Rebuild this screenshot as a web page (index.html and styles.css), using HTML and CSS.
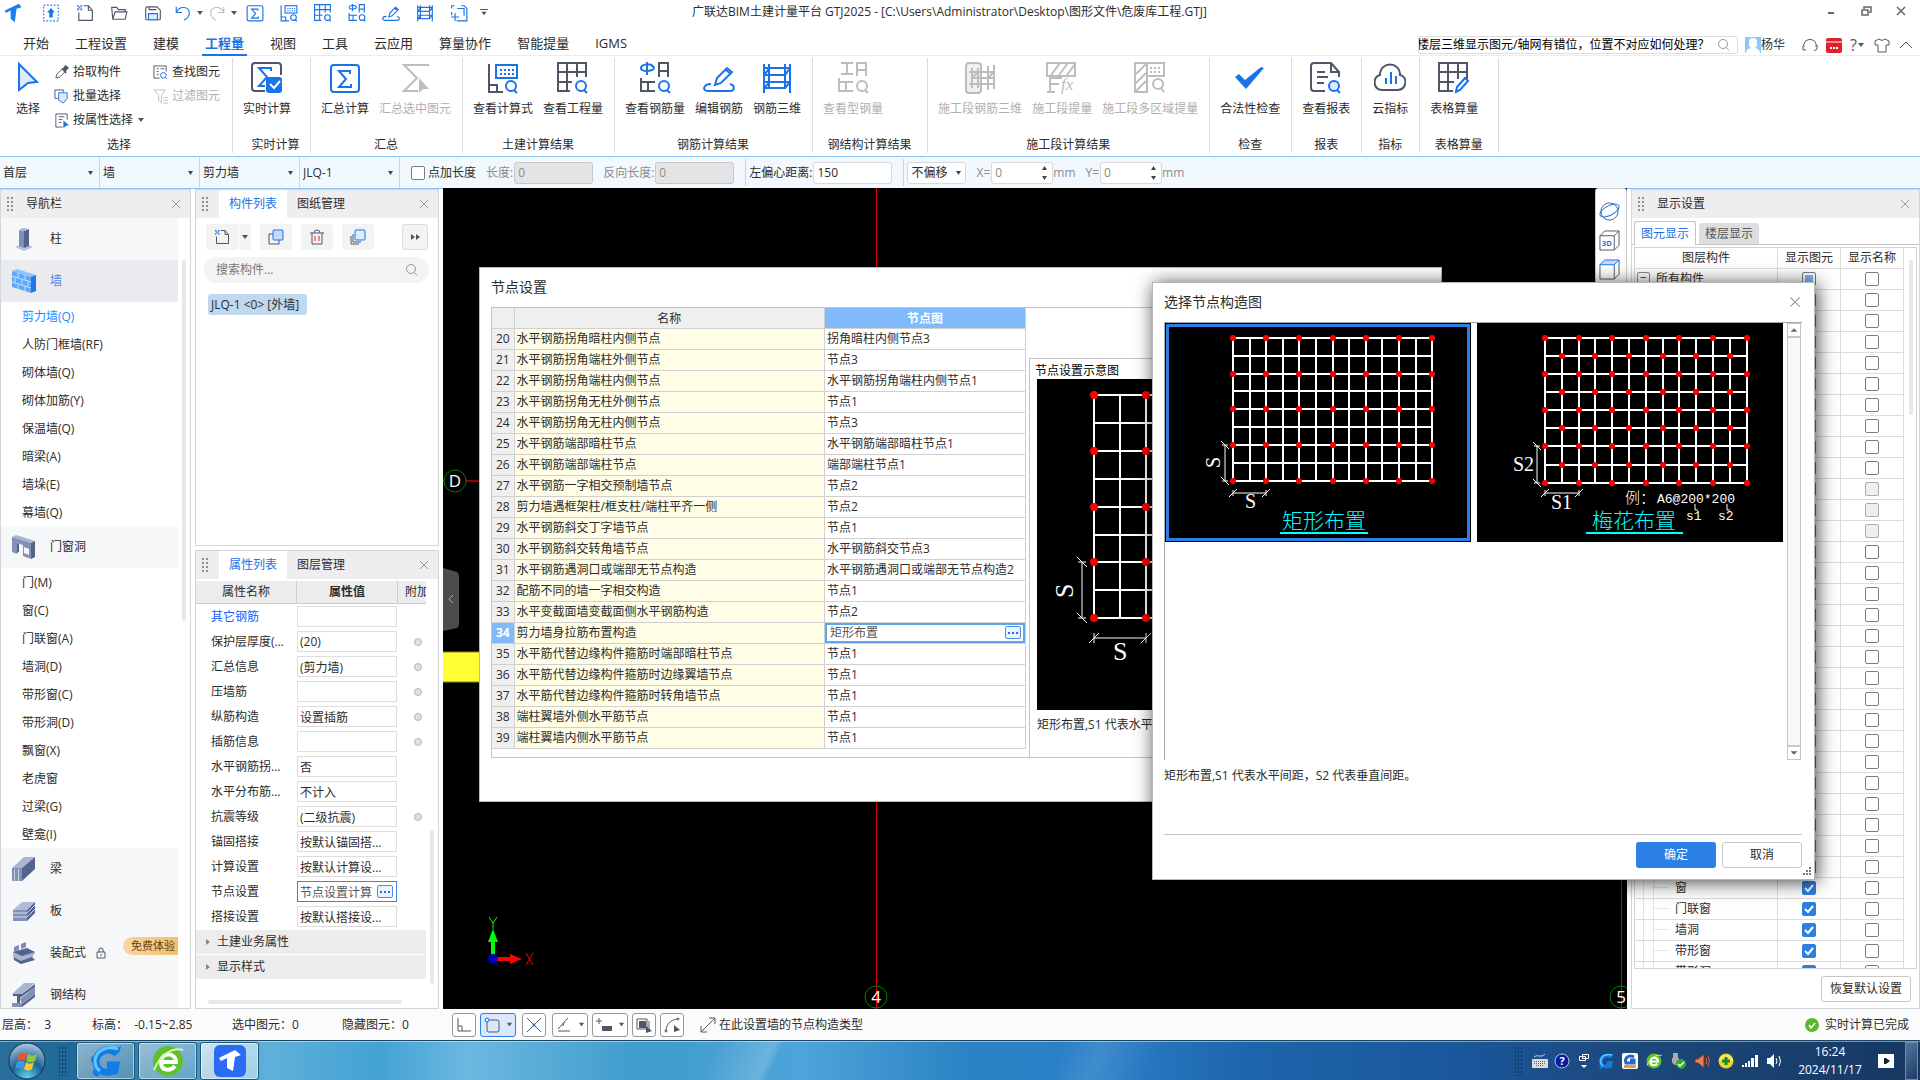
FILE: index.html
```html
<!DOCTYPE html>
<html lang="zh-CN">
<head>
<meta charset="utf-8">
<title>广联达BIM土建计量平台 GTJ2025</title>
<link rel="stylesheet" href="styles.css">
</head>
<body>
<svg class="sprite" aria-hidden="true">
  <symbol id="drag" viewBox="0 0 8 16"><path class="fg" d="M1 1h2v2H1zM5 1h2v2H5zM1 5h2v2H1zM5 5h2v2H5zM1 9h2v2H1zM5 9h2v2H5zM1 13h2v2H1zM5 13h2v2H5z"/></symbol>
  <symbol id="x" viewBox="0 0 12 12"><path class="sg" d="M2 2l8 8M10 2l-8 8"/></symbol>
  <symbol id="mag" viewBox="0 0 16 16"><circle class="sg" cx="7" cy="7" r="4.5"/><path class="sg" d="M10.500 10.500l2.500 3"/></symbol>
  <symbol id="down" viewBox="0 0 8 8"><path class="fd" d="M1 2h6L4 6z"/></symbol>
  <symbol id="more3" viewBox="0 0 12 10"><path class="f1" d="M1 4h2v2H1zM5 4h2v2H5zM9 4h2v2H9z"/></symbol>
  <symbol id="up-box" viewBox="0 0 32 32"><rect class="s1" x="3" y="2" width="26" height="28" stroke-dasharray="3 3" stroke-width="3"/><path class="f1" d="M16 7l7 8h-4v9h-6v-9H9z"/></symbol>
  <symbol id="new" viewBox="0 0 32 32"><path class="s2" d="M14 3h8l7 8v18H5V15"/><path class="s2" d="M22 3v8h7"/><path class="f1" d="M2 2h3v3H2zM8 2h3v3H8zM5 5h3v3H5zM2 8h3v3H2zM8 8h3v3H8z"/></symbol>
  <symbol id="open" viewBox="0 0 32 32"><path class="s2" d="M5 27L3 6h9l3 4h12v4M5 27h22l3-13H9z"/></symbol>
  <symbol id="save" viewBox="0 0 32 32"><path class="s2" d="M3 26V8q0-3 3-3h17l6 6v15q0 2-2 2H5q-2 0-2-2zM9 5v5h13"/><path class="s1 t1" d="M8 28V17h16v11z"/></symbol>
  <symbol id="undo" viewBox="0 0 32 32"><path class="s1" d="M4 5v10h10M4 15C10 2 28 4 27 17c0 6-4 9-9 12"/></symbol>
  <symbol id="redo" viewBox="0 0 32 32"><path class="s1" d="M28 5v10H18M28 15C22 2 4 4 5 17c0 6 4 9 9 12"/></symbol>
  <symbol id="sigma" viewBox="0 0 32 32"><rect class="s1" x="2" y="3" width="28" height="27" rx="3"/><path class="s1" d="M21 12V9H10l7 8-7 8h12v-3"/></symbol>
  <symbol id="live" viewBox="0 0 32 32"><path class="s2" d="M14 29H4q-3 0-3-3V4q0-3 3-3h23q3 0 3 3v9"/><path class="s1" d="M20 9V6H8l8 9-8 9h6"/><rect class="f1" x="15" y="15" width="16" height="16" rx="3"/><path class="sw" d="M19 22l4 4 6-7"/></symbol>
  <symbol id="sigma-sel" viewBox="0 0 32 32"><path class="s1" d="M30 3H5l13 13L5 29h14"/><path class="f1" d="M20 16l10 11h-6l-4 4z"/></symbol>
  <symbol id="formula" viewBox="0 0 32 32"><path class="s2" d="M2 2v28h8v-7H2M10 30h6"/><rect class="s1" x="9" y="3" width="21" height="13"/><path class="s1" stroke-dasharray="2 2" d="M13 8h14M13 12h14"/><circle class="s1" cx="24" cy="24" r="5"/><path class="s1" d="M27 28l3 3"/></symbol>
  <symbol id="table-q" viewBox="0 0 32 32"><path class="s2" d="M13 29H1V1h28v14M10 1v28M20 1v14M1 10h28M1 20h14"/><circle class="s1" cx="24" cy="24" r="5"/><path class="s1" d="M27 28l3 3"/></symbol>
  <symbol id="rebar-q" viewBox="0 0 32 32"><path class="s1" d="M8 0v13M13 3c-5-2-11 0-11 3s6 4 11 2-1-5-1-5"/><path class="s2" d="M20 15V1h9v14M20 9h9M2 16v13h14M2 20h14M9 20v9"/><circle class="s1" cx="25" cy="24" r="5"/><path class="s1" d="M28 28l3 3"/></symbol>
  <symbol id="edit" viewBox="0 0 32 32"><path class="s1" d="M12 23l2-7L24 6l5 4-11 11zM23 8l5 4M8 22c-8 0-9 7-3 7h22c5 0 5-6 0-7"/></symbol>
  <symbol id="rebar3d" viewBox="0 0 32 32"><path class="s1" d="M3 2v29M8 2v25M24 2v25M29 2v29M3 6h26M3 13l5-6M3 13h21l5-7M3 20h26M3 26l5-5M3 26h21l5-6"/></symbol>
  <symbol id="frame" viewBox="0 0 32 32"><path class="s1" d="M3 8V3h5M20 3h5l5 5v22H12M3 14v6M13 8h12v13M2 23h14M9 16v14"/></symbol>
  <symbol id="steel-q" viewBox="0 0 32 32"><path class="s1" d="M4 1h12M4 12h12M10 1v11M20 14V1h9v13M20 8h9M2 16v13h14M2 20h14M9 20v9"/><circle class="s1" cx="25" cy="24" r="5"/><path class="s1" d="M28 28l3 3"/></symbol>
  <symbol id="seg3d" viewBox="0 0 32 32"><rect class="s1 t1" x="2" y="1" width="15" height="30" rx="3"/><path class="s1" d="M8 6v20M14 6v20M24 4v24M30 3v24M5 10h25M5 22h25M8 16h22M8 16l6-6M24 16l6-6"/></symbol>
  <symbol id="segfx" viewBox="0 0 32 32"><path class="s1" d="M1 14V1h28v13zM5 13L14 1M13 13L22 1M21 13l8-11M4 30V16h12M4 22h9M1 30h8"/><text class="fx" x="15" y="28">fx</text></symbol>
  <symbol id="segarea" viewBox="0 0 32 32"><path class="s1" d="M13 30H1V1h29v13H13zM13 1v29M2 12L12 2M2 21l10-10M2 29l10-10"/><path class="s1" stroke-dasharray="2 2" d="M16 6h11M16 10h11"/><circle class="s1" cx="24" cy="22" r="5"/><path class="s1" d="M27 26l3 4"/></symbol>
  <symbol id="check" viewBox="0 0 32 32"><path class="f1" d="M1 15l4-3 6 6L27 5l3 1-18 21z"/></symbol>
  <symbol id="report" viewBox="0 0 32 32"><path class="s2" d="M15 29H4q-3 0-3-3V4q0-3 3-3h17l8 9v5M21 1v9h8M7 10h8M7 15h11M7 21h7"/><circle class="s1 t1" cx="24" cy="24" r="5"/><path class="s1" d="M27 28l3 3"/></symbol>
  <symbol id="cloud" viewBox="0 0 32 32"><path class="s2" d="M8 28C-2 27-1 14 6 13 6-1 26-1 26 13c8 2 7 14-2 15z"/><path class="s1" d="M12 22v-6M17 22V10M22 22v-8"/></symbol>
  <symbol id="table-e" viewBox="0 0 32 32"><path class="s2" d="M15 29H1V1h28v16M10 1v28M20 1v16M1 10h28M1 20h15"/><path class="s1" d="M18 30l1-5 8-9 3 3-8 9z"/></symbol>
  <symbol id="cursor" viewBox="0 0 24 30"><path class="s1 t1" d="M3 2l18 18-9 1-9 7z"/></symbol>
  <symbol id="pipette" viewBox="0 0 16 16"><path class="s2" d="M2 14l1-4 6-6 3 3-6 6z"/><path class="f2" d="M8 4l2-1 2-3 4 3-3 3v3h-1z"/></symbol>
  <symbol id="batch" viewBox="0 0 16 16"><path class="s2" d="M4 10H1V1h9v2"/><path class="s1 t1" d="M5 4h9v6l-4 5-5-3z"/></symbol>
  <symbol id="byprop" viewBox="0 0 16 16"><path class="s2" d="M9 15H2V1h12v6M5 4h6M5 7h4M5 10h3"/><path class="f1" d="M10 8l6 5-3 .5L10 16z"/></symbol>
  <symbol id="find" viewBox="0 0 16 16"><path class="s2" d="M7 14H1V1h13v6M4 4h2M8 4h4M4 7h2M4 10h2"/><circle class="s1" cx="11" cy="11" r="3"/><path class="s1" d="M13 13l2 2"/></symbol>
  <symbol id="filter" viewBox="0 0 16 16"><path class="s1" d="M1 1h12L9 7v8l-3-3V7zM11 9h5M11 12h5M11 15h5"/></symbol>
  <symbol id="copy" viewBox="0 0 16 16"><path class="s2" d="M5 5H1v10h10v-4"/><rect class="s1 t2" x="5" y="1" width="10" height="10" rx="1"/></symbol>
  <symbol id="trash" viewBox="0 0 16 16"><path class="s2" d="M1 4h14M3 4v11h10V4M5 4q0-3 3-3t3 3"/><path class="sr" d="M6 7v5M10 7v5"/></symbol>
  <symbol id="stack" viewBox="0 0 16 16"><path class="s2" d="M3 5v8h8M1 7v8h8"/><rect class="s1 t1" x="5" y="1" width="10" height="10" rx="1"/></symbol>
  <symbol id="planet" viewBox="0 0 22 22"><circle class="s2" cx="11" cy="11" r="9"/><ellipse class="s1" cx="11" cy="10" rx="11" ry="5" transform="rotate(-28 11 10)"/></symbol>
  <symbol id="cube3d" viewBox="0 0 22 22"><path class="s2" d="M1 6h15v15H1zM1 6l5-5h15v15l-5 5M16 6l5-5"/><text class="t3d" x="3" y="17">3D</text></symbol>
  <symbol id="cube" viewBox="0 0 22 22"><path class="s2" d="M1 6v15h15V6M16 21l5-5V1"/><path class="s1 t2" d="M1 6l5-5h15l-5 5z"/></symbol>
  <symbol id="tlogo" viewBox="0 0 24 24"><path d="M1 9L18 1l3 4-6 2-2 16-5-4V9L2 12z" fill="currentColor"/></symbol>
  <symbol id="gball" viewBox="0 0 32 32"><path fill="none" stroke="#127ce6" stroke-width="7" d="M26 8C19 2 6 6 6 17c0 12 18 14 20 3h-9"/><path fill="#127ce6" d="M22 2q5 1 9-1-1 8-7 10zM3 11a4 4 0 0 0 0 7zM4 24a4 4 0 0 0 6 6zM22 29a4 4 0 0 0 6-5z"/><path fill="none" stroke="#5cc8ff" stroke-width="3" d="M28 4C18 1 6 4 5 16c0 5 2 8 5 10"/></symbol>
  <symbol id="eball" viewBox="0 0 32 32"><circle cx="16" cy="16" r="15" fill="#5ec02a"/><path fill="none" stroke="#fff" stroke-width="4" d="M9 17h15c0-10-15-10-15 0s10 9 14 4"/><path fill="none" stroke="#d6f5b0" stroke-width="2" d="M2 25C8 10 20 2 31 5"/></symbol>
  <symbol id="hgrid" viewBox="0 0 306 219">
    <path class="mesh" d="M68 15v143M85 15v143M101 15v143M118 15v143M134 15v143M151 15v143M168 15v143M184 15v143M201 15v143M217 15v143M234 15v143M251 15v143M267 15v143M67 15h201M67 33h201M67 51h201M67 68h201M67 86h201M67 104h201M67 122h201M67 140h201M67 158h201"/>
    <g id="dots7" fill="#f00"><circle cx="68" cy="15" r="3"/><circle cx="101" cy="15" r="3"/><circle cx="134" cy="15" r="3"/><circle cx="168" cy="15" r="3"/><circle cx="201" cy="15" r="3"/><circle cx="234" cy="15" r="3"/><circle cx="267" cy="15" r="3"/></g>
    <use href="#dots7" y="36"/><use href="#dots7" y="71"/><use href="#dots7" y="107"/><use href="#dots7" y="143"/>
    <path class="dim" d="M60 122v36M56 118l8 8M57 122h6M56 154l8 8M57 158h6"/><path class="dim" d="M68 170h33M64 174l8-8M68 167v6M97 174l8-8M101 167v6"/>
    <text class="cad" x="80" y="185">S</text><text class="cad" transform="translate(55 145) rotate(-90)">S</text>
    <text class="cadname" x="117" y="205">矩形布置</text><path class="cadline" d="M115 210h88"/>
  </symbol>
  <symbol id="mgrid" viewBox="0 0 306 219">
    <path class="mesh" d="M68 15v145M85 15v145M102 15v145M118 15v145M135 15v145M152 15v145M169 15v145M186 15v145M202 15v145M219 15v145M236 15v145M253 15v145M270 15v145M67 15h204M67 33h204M67 51h204M67 69h204M67 87h204M67 105h204M67 123h204M67 142h204M67 160h204"/>
    <g id="dotsA" fill="#f00"><circle cx="68" cy="15" r="3"/><circle cx="102" cy="15" r="3"/><circle cx="135" cy="15" r="3"/><circle cx="169" cy="15" r="3"/><circle cx="202" cy="15" r="3"/><circle cx="236" cy="15" r="3"/><circle cx="270" cy="15" r="3"/></g>
    <use href="#dotsA" y="36"/><use href="#dotsA" y="72"/><use href="#dotsA" y="108"/><use href="#dotsA" y="145"/>
    <g id="dotsB" fill="#f00"><circle cx="85" cy="33" r="3"/><circle cx="118" cy="33" r="3"/><circle cx="152" cy="33" r="3"/><circle cx="186" cy="33" r="3"/><circle cx="219" cy="33" r="3"/><circle cx="253" cy="33" r="3"/></g>
    <use href="#dotsB" y="36"/><use href="#dotsB" y="72"/><use href="#dotsB" y="109"/>
    <path class="dim" d="M60 123v37M56 119l8 8M57 123h6M56 156l8 8M57 160h6M68 170h34M64 174l8-8M68 167v6M98 174l8-8M102 167v6M218 181v6h3M250 181v6h3"/>
    <text class="cad" x="36" y="148">S2</text><text class="cad" x="74" y="186">S1</text>
    <text class="cadnote" x="148" y="180">例：</text><text class="cadnote mono" x="180" y="180">A6@200*200</text>
    <text class="cadnote mono" x="209" y="197">s1</text><text class="cadnote mono" x="241" y="197">s2</text>
    <text class="cadname" x="115" y="205">梅花布置</text><path class="cadline" d="M109 210h97"/>
  </symbol>
</svg>

<header class="titlebar">
  <svg class="logo"><use href="#tlogo"/></svg>
  <nav class="quick" aria-label="快速访问">
    <button><svg><use href="#up-box"/></svg></button>
    <button><svg><use href="#new"/></svg></button>
    <button><svg><use href="#open"/></svg></button>
    <button><svg><use href="#save"/></svg></button>
    <button class="drop"><svg><use href="#undo"/></svg><svg class="caret"><use href="#down"/></svg></button>
    <button class="drop off"><svg><use href="#redo"/></svg><svg class="caret"><use href="#down"/></svg></button>
    <button><svg><use href="#sigma"/></svg></button>
    <button><svg class="blue"><use href="#formula"/></svg></button>
    <button><svg class="blue"><use href="#table-q"/></svg></button>
    <button><svg class="blue"><use href="#rebar-q"/></svg></button>
    <button><svg><use href="#edit"/></svg></button>
    <button><svg><use href="#rebar3d"/></svg></button>
    <button><svg><use href="#frame"/></svg></button>
    <button class="more"><svg class="caret"><use href="#down"/></svg></button>
  </nav>
  <h1>广联达BIM土建计量平台 GTJ2025 - [C:\Users\Administrator\Desktop\图形文件\危废库工程.GTJ]</h1>
  <div class="winctl">
    <button><svg viewBox="0 0 12 12"><path d="M3 8h6" stroke="#666" stroke-width="2"/></svg></button>
    <button><svg viewBox="0 0 12 12"><path d="M4 4V2h7v5H9M2 5h6v5H2zM4 2h7M2 5h6" fill="none" stroke="#666" stroke-width="1.500"/></svg></button>
    <button><svg viewBox="0 0 12 12"><path d="M2 2l8 8M10 2l-8 8" stroke="#666" stroke-width="1.500"/></svg></button>
  </div>
</header>

<div class="menubar">
  <nav class="tabs">
    <a href="#">开始</a><a href="#">工程设置</a><a href="#">建模</a><a href="#" class="on">工程量</a><a href="#">视图</a><a href="#">工具</a><a href="#">云应用</a><a href="#">算量协作</a><a href="#">智能提量</a><a href="#">IGMS</a>
  </nav>
  <div class="userbar">
    <div class="ask"><input type="text" aria-label="搜索" value="楼层三维显示图元/轴网有错位，位置不对应如何处理？"><svg><use href="#mag"/></svg></div>
    <a href="#" class="user"><svg viewBox="0 0 16 16"><path fill="#8fc8f8" d="M0 0h16v16H0z"/><path fill="#fff" d="M4 5q0-4 4-4t4 4v4l-2 2q5 1 5 5H1q0-4 5-5L4 9z"/></svg>杨华</a>
    <button><svg viewBox="0 0 16 16"><path class="s2" d="M2 10C0 0 16 0 14 10M1 9v4h3M15 8v4l-3 2"/></svg></button>
    <button><svg viewBox="0 0 16 16"><rect width="16" height="15" rx="2" y="1" fill="#e0202a"/><path d="M0 5h16" stroke="#fff"/><path d="M4 10h2v2H4zM7 10h2v2H7zM10 10h2v2h-2z" fill="#fff"/></svg></button>
    <button class="help">?<svg class="caret"><use href="#down"/></svg></button>
    <button><svg viewBox="0 0 16 16"><path class="s2" d="M5 2L1 4v4h3v7h8V8h3V4l-4-2q-3 3-6 0z"/></svg></button>
    <button><svg viewBox="0 0 16 16"><path class="s2" d="M2 11l6-6 6 6"/></svg></button>
  </div>
</div>

<section class="ribbon">
  <div class="group g-sel">
    <div class="tools">
      <button class="big"><svg class="cur"><use href="#cursor"/></svg>选择</button>
      <div class="stackcol">
        <button><svg><use href="#pipette"/></svg>拾取构件</button>
        <button><svg><use href="#batch"/></svg>批量选择</button>
        <button><svg><use href="#byprop"/></svg>按属性选择<svg class="caret"><use href="#down"/></svg></button>
      </div>
      <div class="stackcol">
        <button><svg><use href="#find"/></svg>查找图元</button>
        <button class="off"><svg><use href="#filter"/></svg>过滤图元</button>
      </div>
    </div>
    <h2>选择</h2>
  </div>
  <div class="group g-live"><div class="tools"><button class="big"><svg><use href="#live"/></svg>实时计算</button></div><h2>实时计算</h2></div>
  <div class="group"><div class="tools"><button class="big"><svg><use href="#sigma"/></svg>汇总计算</button><button class="big off"><svg><use href="#sigma-sel"/></svg>汇总选中图元</button></div><h2>汇总</h2></div>
  <div class="group"><div class="tools"><button class="big"><svg><use href="#formula"/></svg>查看计算式</button><button class="big"><svg><use href="#table-q"/></svg>查看工程量</button></div><h2>土建计算结果</h2></div>
  <div class="group"><div class="tools"><button class="big"><svg><use href="#rebar-q"/></svg>查看钢筋量</button><button class="big"><svg><use href="#edit"/></svg>编辑钢筋</button><button class="big"><svg><use href="#rebar3d"/></svg>钢筋三维</button></div><h2>钢筋计算结果</h2></div>
  <div class="group g-steel"><div class="tools"><button class="big off"><svg><use href="#steel-q"/></svg>查看型钢量</button></div><h2>钢结构计算结果</h2></div>
  <div class="group"><div class="tools"><button class="big off"><svg><use href="#seg3d"/></svg>施工段钢筋三维</button><button class="big off"><svg><use href="#segfx"/></svg>施工段提量</button><button class="big off"><svg><use href="#segarea"/></svg>施工段多区域提量</button></div><h2>施工段计算结果</h2></div>
  <div class="group"><div class="tools"><button class="big"><svg><use href="#check"/></svg>合法性检查</button></div><h2>检查</h2></div>
  <div class="group"><div class="tools"><button class="big"><svg><use href="#report"/></svg>查看报表</button></div><h2>报表</h2></div>
  <div class="group"><div class="tools"><button class="big"><svg><use href="#cloud"/></svg>云指标</button></div><h2>指标</h2></div>
  <div class="group g-last"><div class="tools"><button class="big"><svg><use href="#table-e"/></svg>表格算量</button></div><h2>表格算量</h2></div>
</section>

<section class="options">
  <select aria-label="楼层"><option>首层</option></select>
  <select aria-label="构件大类"><option>墙</option></select>
  <select aria-label="构件类型"><option>剪力墙</option></select>
  <select aria-label="构件"><option>JLQ-1</option></select>
  <div class="optset"><label class="tick"><input type="checkbox">点加长度</label>
    <label class="dis">长度:<input type="text" value="0" disabled></label>
    <label class="dis">反向长度:<input type="text" value="0" disabled></label></div>
  <div class="optset next"><label>左偏心距离:<input type="text" value="150"></label></div>
  <div class="optset next"><select aria-label="偏移"><option>不偏移</option></select>
    <label class="dis">X=<input class="spin" type="text" value="0">mm</label>
    <label class="dis">Y=<input class="spin" type="text" value="0">mm</label></div>
</section>

<main>
  <aside class="panel navpanel">
    <div class="phead"><svg class="drag"><use href="#drag"/></svg><span class="ptitle">导航栏</span><button class="close"><svg><use href="#x"/></svg></button></div>
    <div class="navlist">
      <a class="cat" href="#"><svg viewBox="0 0 24 24"><path fill="#b8c3db" d="M3 20l9-4 9 4-9 4z"/><path fill="#8090b5" d="M7 3l5 1v17l-5-2z"/><path fill="#52648c" d="M12 4l5-2v17l-5 2z"/><path fill="#a7b4d0" d="M7 3l4-2 6 1-5 2z"/></svg>柱</a>
      <a class="cat on" href="#"><svg viewBox="0 0 24 24"><path fill="#8fc3fb" d="M0 2l5-2 19 6-5 2z"/><path fill="#5fa8f8" d="M0 2l19 6v16L0 18z"/><path fill="#2476e8" d="M19 8l5-2v16l-5 2z"/><path stroke="#c4e0ff" fill="none" d="M0 7l19 6M0 13l19 6M6 4v5M13 6v5M3 8v6M10 11v5M16 12v5M6 15v5M13 17v5"/></svg>墙</a>
      <a class="on" href="#">剪力墙(Q)</a><a href="#">人防门框墙(RF)</a><a href="#">砌体墙(Q)</a><a href="#">砌体加筋(Y)</a><a href="#">保温墙(Q)</a><a href="#">暗梁(A)</a><a href="#">墙垛(E)</a><a href="#">幕墙(Q)</a>
      <a class="cat" href="#"><svg viewBox="0 0 24 24"><path fill="#a9b5d2" d="M0 2l4-2 19 6-4 2z"/><path fill="#8291b8" fill-rule="evenodd" d="M0 2l19 6v16l-8-3V10L5 8v11l-5-2zM12 12v6l5 2v-6z"/><path fill="#52648c" d="M19 8l4-2v16l-4 2zM5 8l2 1v8l-2 1z"/></svg>门窗洞</a>
      <a href="#">门(M)</a><a href="#">窗(C)</a><a href="#">门联窗(A)</a><a href="#">墙洞(D)</a><a href="#">带形窗(C)</a><a href="#">带形洞(D)</a><a href="#">飘窗(X)</a><a href="#">老虎窗</a><a href="#">过梁(G)</a><a href="#">壁龛(I)</a>
      <a class="cat" href="#"><svg viewBox="0 0 24 24"><path fill="#a9b5d2" d="M0 11L12 0h11L10 11z"/><path fill="#8291b8" d="M0 11h10v13H0z"/><path fill="#c4cde0" d="M2 12h1v12H2zM6 12h1v12H6z"/><path fill="#52648c" d="M10 11L23 0v12L10 24z"/></svg>梁</a>
      <a class="cat" href="#"><svg viewBox="0 0 24 24"><path fill="#b2bdd8" d="M1 11l9-8h13l-8 8z"/><path fill="#8291b8" d="M1 11h14v11H1z"/><path fill="#52648c" d="M15 11l8-8v11l-8 8z"/><path stroke="#d4dbea" d="M1 14h14l8-8M1 18h14l8-8" fill="none"/></svg>板</a>
      <a class="cat" href="#"><svg viewBox="0 0 24 24"><path fill="#7d8db5" d="M2 6l5-2v5l-5 2zM9 3l5-2v5L9 8z"/><path fill="#52648c" d="M1 11l14-4 8 4-3 5 3 3-14 4-7-4z"/><path fill="#a9b5d2" d="M1 11l9 4 13-4-3 5-11 4-8-4z"/></svg>装配式<svg class="lock" viewBox="0 0 12 12"><path class="s2" d="M2 5h8v6H2zM4 5V2q2-2 4 0v3M6 7v2"/></svg><span class="trial">免费体验</span></a>
      <a class="cat" href="#"><svg viewBox="0 0 24 24"><path fill="#a9b5d2" d="M0 11L12 0h11L10 11z"/><path fill="#52648c" d="M10 11L23 1v3L8 15v5H5v-7H1v-2zM10 21l13-10v3L10 24z"/><path fill="#8291b8" d="M0 20h10v4H0zM8 16l15-12v7L10 21z"/></svg>钢结构</a>
    </div>
    <i class="vbar"></i>
  </aside>

  <div class="midcol">
    <aside class="panel complist">
      <div class="phead"><svg class="drag"><use href="#drag"/></svg><button class="ptab on">构件列表</button><button class="ptab">图纸管理</button><button class="close"><svg><use href="#x"/></svg></button></div>
      <div class="ctools">
        <div class="split"><button><svg><use href="#new"/></svg></button><button class="thin"><svg class="caret"><use href="#down"/></svg></button></div>
        <button><svg><use href="#copy"/></svg></button>
        <button><svg><use href="#trash"/></svg></button>
        <button><svg><use href="#stack"/></svg></button>
        <button class="fwd"><svg viewBox="0 0 16 16"><path class="f2" d="M4 5l4 3-4 3zM9 5l4 3-4 3z"/></svg></button>
      </div>
      <div class="csearch"><input type="text" placeholder="搜索构件..." aria-label="搜索构件"><svg><use href="#mag"/></svg></div>
      <button class="citem">JLQ-1 &lt;0&gt; [外墙]</button>
    </aside>
    <aside class="panel props">
      <div class="phead"><svg class="drag"><use href="#drag"/></svg><button class="ptab on">属性列表</button><button class="ptab">图层管理</button><button class="close"><svg><use href="#x"/></svg></button></div>
      <div class="phdr"><span>属性名称</span><b>属性值</b><span class="add">附加</span></div>
      <div class="prows">
        <label class="lnk"><span>其它钢筋</span><input type="text"></label>
        <label><span>保护层厚度(...</span><input type="text" value="(20)"><i></i></label>
        <label><span>汇总信息</span><input type="text" value="(剪力墙)"><i></i></label>
        <label><span>压墙筋</span><input type="text"><i></i></label>
        <label><span>纵筋构造</span><input type="text" value="设置插筋"><i></i></label>
        <label><span>插筋信息</span><input type="text"><i></i></label>
        <label><span>水平钢筋拐...</span><input type="text" value="否"></label>
        <label><span>水平分布筋...</span><input type="text" value="不计入"></label>
        <label><span>抗震等级</span><input type="text" value="(二级抗震)"><i></i></label>
        <label><span>锚固搭接</span><input type="text" value="按默认锚固搭..."></label>
        <label><span>计算设置</span><input type="text" value="按默认计算设..."></label>
        <label class="act"><span>节点设置</span><input type="text" value="节点设置计算"><button class="dots"><svg><use href="#more3"/></svg></button></label>
        <label><span>搭接设置</span><input type="text" value="按默认搭接设..."></label>
      </div>
      <button class="pgroup">土建业务属性</button>
      <button class="pgroup">显示样式</button>
      <i class="vbar"></i><i class="hbar"></i>
    </aside>
  </div>

  <section class="canvas">
    <svg class="scene">
      <path d="M433.500 0v821M1178.500 0v821" stroke="#e00000"/>
      <path d="M0 293h60" stroke="#900000" stroke-width="2"/>
      <path d="M-4 464h60v30H-4z" fill="#ffff33" stroke="#8a8a20"/>
      <g fill="#000" stroke="#008000"><circle cx="12" cy="293" r="11"/><circle cx="433" cy="809" r="11" fill="none"/><circle cx="1178" cy="809" r="11" fill="none"/></g>
      <g class="axis"><text x="12" y="299">D</text><text x="433" y="815">4</text><text x="1178" y="815">5</text></g>
      <path d="M0 380l14 4q2 1 2 5v46q0 4-2 5l-14 3z" fill="#4c4c4c"/><path d="M10 407l-4 4 4 4" fill="none" stroke="#aaa"/>
      <path d="M50 771v-20" stroke="#0f0" stroke-width="4"/><path d="M45 754l5-13 5 13z" fill="#0f0"/><path d="M46 729l4 6v6M54 729l-4 6" fill="none" stroke="#0f0"/>
      <path d="M50 771h20" stroke="#f00" stroke-width="4"/><path d="M67 766l12 5-12 5z" fill="#f00"/><path d="M83 765l7 12M90 765l-7 12" stroke="#f00"/>
      <circle cx="50" cy="771" r="5" fill="#0000b8"/>
    </svg>
    <div class="viewbar"><button><svg><use href="#planet"/></svg></button><button><svg><use href="#cube3d"/></svg></button><button><svg><use href="#cube"/></svg></button></div>
  </section>

  <aside class="panel display">
    <div class="phead"><svg class="drag"><use href="#drag"/></svg><span class="ptitle">显示设置</span><button class="close"><svg><use href="#x"/></svg></button></div>
    <div class="dtabs"><button class="on">图元显示</button><button>楼层显示</button></div>
    <div class="dwrap">
      <table>
        <thead><tr><th id="h1">图层构件</th><th id="h2">显示图元</th><th id="h3">显示名称</th></tr></thead>
        <tbody>
          <tr class="root"><td><span class="minus">−</span>所有构件</td><td><input aria-labelledby="h2" type="checkbox" class="part"></td><td><input aria-labelledby="h3" type="checkbox"></td></tr>
          <tr><td></td><td><input aria-labelledby="h2" type="checkbox"></td><td><input aria-labelledby="h3" type="checkbox"></td></tr>
          <tr><td></td><td><input aria-labelledby="h2" type="checkbox"></td><td><input aria-labelledby="h3" type="checkbox"></td></tr>
          <tr><td></td><td><input aria-labelledby="h2" type="checkbox"></td><td><input aria-labelledby="h3" type="checkbox"></td></tr>
          <tr><td></td><td><input aria-labelledby="h2" type="checkbox" checked></td><td><input aria-labelledby="h3" type="checkbox"></td></tr>
          <tr><td></td><td><input aria-labelledby="h2" type="checkbox"></td><td><input aria-labelledby="h3" type="checkbox"></td></tr>
          <tr><td></td><td><input aria-labelledby="h2" type="checkbox"></td><td><input aria-labelledby="h3" type="checkbox"></td></tr>
          <tr><td></td><td><input aria-labelledby="h2" type="checkbox"></td><td><input aria-labelledby="h3" type="checkbox"></td></tr>
          <tr><td></td><td><input aria-labelledby="h2" type="checkbox"></td><td><input aria-labelledby="h3" type="checkbox"></td></tr>
          <tr><td></td><td><input aria-labelledby="h2" type="checkbox" checked></td><td><input aria-labelledby="h3" type="checkbox"></td></tr>
          <tr><td></td><td><input aria-labelledby="h2" type="checkbox" checked></td><td><input aria-labelledby="h3" type="checkbox" disabled></td></tr>
          <tr><td></td><td><input aria-labelledby="h2" type="checkbox" checked></td><td><input aria-labelledby="h3" type="checkbox" disabled></td></tr>
          <tr><td></td><td><input aria-labelledby="h2" type="checkbox" checked></td><td><input aria-labelledby="h3" type="checkbox" disabled></td></tr>
          <tr><td></td><td><input aria-labelledby="h2" type="checkbox" checked></td><td><input aria-labelledby="h3" type="checkbox"></td></tr>
          <tr><td></td><td><input aria-labelledby="h2" type="checkbox" checked></td><td><input aria-labelledby="h3" type="checkbox"></td></tr>
          <tr><td></td><td><input aria-labelledby="h2" type="checkbox" checked></td><td><input aria-labelledby="h3" type="checkbox"></td></tr>
          <tr><td></td><td><input aria-labelledby="h2" type="checkbox" checked></td><td><input aria-labelledby="h3" type="checkbox"></td></tr>
          <tr><td></td><td><input aria-labelledby="h2" type="checkbox" checked></td><td><input aria-labelledby="h3" type="checkbox"></td></tr>
          <tr><td></td><td><input aria-labelledby="h2" type="checkbox" checked></td><td><input aria-labelledby="h3" type="checkbox"></td></tr>
          <tr><td></td><td><input aria-labelledby="h2" type="checkbox" checked></td><td><input aria-labelledby="h3" type="checkbox"></td></tr>
          <tr><td></td><td><input aria-labelledby="h2" type="checkbox" checked></td><td><input aria-labelledby="h3" type="checkbox"></td></tr>
          <tr><td></td><td><input aria-labelledby="h2" type="checkbox" checked></td><td><input aria-labelledby="h3" type="checkbox"></td></tr>
          <tr><td></td><td><input aria-labelledby="h2" type="checkbox"></td><td><input aria-labelledby="h3" type="checkbox"></td></tr>
          <tr><td></td><td><input aria-labelledby="h2" type="checkbox" checked></td><td><input aria-labelledby="h3" type="checkbox"></td></tr>
          <tr><td></td><td><input aria-labelledby="h2" type="checkbox"></td><td><input aria-labelledby="h3" type="checkbox"></td></tr>
          <tr><td></td><td><input aria-labelledby="h2" type="checkbox" checked></td><td><input aria-labelledby="h3" type="checkbox"></td></tr>
          <tr><td></td><td><input aria-labelledby="h2" type="checkbox" checked></td><td><input aria-labelledby="h3" type="checkbox"></td></tr>
          <tr><td></td><td><input aria-labelledby="h2" type="checkbox"></td><td><input aria-labelledby="h3" type="checkbox"></td></tr>
          <tr><td></td><td><input aria-labelledby="h2" type="checkbox" checked></td><td><input aria-labelledby="h3" type="checkbox"></td></tr>
          <tr><td>窗</td><td><input aria-labelledby="h2" type="checkbox" checked></td><td><input aria-labelledby="h3" type="checkbox"></td></tr>
          <tr><td>门联窗</td><td><input aria-labelledby="h2" type="checkbox" checked></td><td><input aria-labelledby="h3" type="checkbox"></td></tr>
          <tr><td>墙洞</td><td><input aria-labelledby="h2" type="checkbox" checked></td><td><input aria-labelledby="h3" type="checkbox"></td></tr>
          <tr><td>带形窗</td><td><input aria-labelledby="h2" type="checkbox" checked></td><td><input aria-labelledby="h3" type="checkbox"></td></tr>
          <tr><td>带形洞</td><td><input aria-labelledby="h2" type="checkbox" checked></td><td><input aria-labelledby="h3" type="checkbox"></td></tr>
        </tbody>
      </table>
      <i class="vbar"></i>
    </div>
    <div class="dfoot"><button class="plain">恢复默认设置</button></div>
  </aside>

  <section class="dialog nodes">
    <h3>节点设置</h3>
    <div class="nbody">
      <div class="ntable"><table>
        <thead><tr><th></th><th>名称</th><th class="sel">节点图</th></tr></thead>
        <tbody>
          <tr><th>20</th><td>水平钢筋拐角暗柱内侧节点</td><td>拐角暗柱内侧节点3</td></tr>
          <tr><th>21</th><td>水平钢筋拐角端柱外侧节点</td><td>节点3</td></tr>
          <tr><th>22</th><td>水平钢筋拐角端柱内侧节点</td><td>水平钢筋拐角端柱内侧节点1</td></tr>
          <tr><th>23</th><td>水平钢筋拐角无柱外侧节点</td><td>节点1</td></tr>
          <tr><th>24</th><td>水平钢筋拐角无柱内侧节点</td><td>节点3</td></tr>
          <tr><th>25</th><td>水平钢筋端部暗柱节点</td><td>水平钢筋端部暗柱节点1</td></tr>
          <tr><th>26</th><td>水平钢筋端部端柱节点</td><td>端部端柱节点1</td></tr>
          <tr><th>27</th><td>水平钢筋一字相交预制墙节点</td><td>节点2</td></tr>
          <tr><th>28</th><td>剪力墙遇框架柱/框支柱/端柱平齐一侧</td><td>节点2</td></tr>
          <tr><th>29</th><td>水平钢筋斜交丁字墙节点</td><td>节点1</td></tr>
          <tr><th>30</th><td>水平钢筋斜交转角墙节点</td><td>水平钢筋斜交节点3</td></tr>
          <tr><th>31</th><td>水平钢筋遇洞口或端部无节点构造</td><td>水平钢筋遇洞口或端部无节点构造2</td></tr>
          <tr><th>32</th><td>配筋不同的墙一字相交构造</td><td>节点1</td></tr>
          <tr><th>33</th><td>水平变截面墙变截面侧水平钢筋构造</td><td>节点2</td></tr>
          <tr class="cur"><th>34</th><td>剪力墙身拉筋布置构造</td><td><div class="cell">矩形布置<button class="dots"><svg><use href="#more3"/></svg></button></div></td></tr>
          <tr><th>35</th><td>水平筋代替边缘构件箍筋时端部暗柱节点</td><td>节点1</td></tr>
          <tr><th>36</th><td>水平筋代替边缘构件箍筋时边缘翼墙节点</td><td>节点1</td></tr>
          <tr><th>37</th><td>水平筋代替边缘构件箍筋时转角墙节点</td><td>节点1</td></tr>
          <tr><th>38</th><td>端柱翼墙外侧水平筋节点</td><td>节点1</td></tr>
          <tr><th>39</th><td>端柱翼墙内侧水平筋节点</td><td>节点1</td></tr>
        </tbody>
      </table></div>
      <div class="preview">
        <h4>节点设置示意图</h4>
        <svg class="pic">
          <path class="mesh" d="M57 16v224M83 16v224M109 16v224M56 16h70M56 44h70M56 72h70M56 100h70M56 128h70M56 156h70M56 183h70M56 211h70M56 239h70"/>
          <g fill="#f00"><circle cx="57" cy="16" r="4"/><circle cx="109" cy="16" r="4"/><circle cx="57" cy="72" r="4"/><circle cx="109" cy="72" r="4"/><circle cx="57" cy="128" r="4"/><circle cx="109" cy="128" r="4"/><circle cx="57" cy="183" r="4"/><circle cx="109" cy="183" r="4"/><circle cx="57" cy="239" r="4"/><circle cx="109" cy="239" r="4"/></g>
          <path class="dim" d="M45 183v56M40 178l10 10M41 183h8M40 234l10 10M41 239h8M57 259h52M52 264l10-10M57 254v10M104 264l10-10M109 254v10"/>
          <text class="cad xl" x="76" y="281">S</text><text class="cad xl" transform="translate(36 219) rotate(-90)">S</text>
        </svg>
        <p>矩形布置,S1 代表水平</p>
      </div>
    </div>
  </section>

  <section class="dialog picker">
    <div class="dhead"><h3>选择节点构造图</h3><button class="close"><svg><use href="#x"/></svg></button></div>
    <div class="gallery">
      <button class="tile on"><svg viewBox="0 0 306 219"><use href="#hgrid"/></svg></button>
      <button class="tile"><svg viewBox="0 0 306 219"><use href="#mgrid"/></svg></button>
      <div class="sbar"><svg viewBox="0 0 14 14"><path fill="#666" d="M3 9l4-4 4 4z"/></svg><svg viewBox="0 0 14 14"><path fill="#666" d="M3 5h8L7 9z"/></svg></div>
    </div>
    <p>矩形布置,S1 代表水平间距，S2 代表垂直间距。</p>
    <div class="acts"><button class="primary">确定</button><button class="plain">取消</button></div>
    <svg class="grip" viewBox="0 0 8 8"><path fill="#777" d="M6 0h2v2H6zM3 3h2v2H3zM6 3h2v2H6zM0 6h2v2H0zM3 6h2v2H3zM6 6h2v2H6z"/></svg>
  </section>
</main>

<footer class="status">
  <span class="st1">层高：&nbsp; 3</span><span class="st2">标高：&nbsp; -0.15~2.85</span><span class="st3">选中图元：0</span><span class="st4">隐藏图元：0</span>
  <div class="snap">
    <button><svg viewBox="0 0 16 16"><path class="s2" d="M2 1v13h13M2 9h4v5"/></svg></button>
    <button class="w on"><svg viewBox="0 0 16 16"><rect class="s2" x="3" y="3" width="12" height="12" rx="2"/><circle class="s1 t1" cx="3" cy="3" r="2"/></svg><svg class="caret"><use href="#down"/></svg></button>
    <button class="gap"><svg viewBox="0 0 16 16"><path class="s2" d="M1 1l14 14M15 1L1 15"/><circle class="s1" cx="8" cy="8" r="1"/></svg></button>
    <button class="w gap"><svg viewBox="0 0 16 16"><path class="s2" d="M2 12L12 1M8 5l-1 4M2 14h12"/></svg><svg class="caret"><use href="#down"/></svg></button>
    <button class="w"><svg viewBox="0 0 16 16"><path class="s2" d="M3 1v6M0 4h6"/><path class="f2" d="M6 9h10v5H6z"/></svg><svg class="caret"><use href="#down"/></svg></button>
    <button><svg viewBox="0 0 16 16"><path class="s2" d="M1 2h10v10H1zM13 4v8"/><path class="f2" d="M3 4h7v7H3zM10 9l6 5-6 2z"/></svg></button>
    <button><svg viewBox="0 0 16 16"><path class="s2" d="M2 14C2 8 6 3 13 2"/><circle class="s2" cx="2" cy="14" r="1"/><circle class="s2" cx="14" cy="2" r="1"/><path class="f2" d="M10 8l6 5-6 2z"/></svg></button>
  </div>
  <svg class="tipicon" viewBox="0 0 16 16"><path class="s2" d="M1 15L15 1M9 1h6v6M1 9v6h6"/></svg><span>在此设置墙的节点构造类型</span>
  <span class="done"><svg viewBox="0 0 14 14"><circle cx="7" cy="7" r="7" fill="#5cb531"/><path d="M4 7l2 3 4-5" fill="none" stroke="#fff" stroke-width="1.500"/></svg>实时计算已完成</span>
</footer>

<div class="taskbar">
  <button class="orb"><svg viewBox="0 0 38 38"><defs><radialGradient id="og" cx=".5" cy=".95" r=".9"><stop offset="0" stop-color="#5fd0f0"/><stop offset=".5" stop-color="#1c6298"/><stop offset="1" stop-color="#9fc0d8"/></radialGradient></defs><circle cx="19" cy="19" r="18" fill="url(#og)" stroke="#0d3350"/><path fill="#e8562a" d="M11 12q4-3 8 0l-2 7q-4-3-8 0z"/><path fill="#8cc63e" d="M20 12q4 3 9 0l-2 7q-4 3-9 0z"/><path fill="#3a9be0" d="M9 20q4-3 8 0l-2 7q-4-3-8 0z"/><path fill="#fcc62c" d="M18 20q4 3 8 0l-2 7q-4 3-8 0z"/></svg></button>
  <i class="dotgrip"></i>
  <button class="app"><svg viewBox="0 0 32 32"><use href="#gball"/></svg></button>
  <button class="app"><svg viewBox="0 0 32 32"><use href="#eball"/></svg></button>
  <button class="app on"><svg viewBox="0 0 32 32"><rect width="32" height="32" rx="6" fill="#2a6cf6"/><path fill="#fff" d="M5 13L21 5l6 5-6 2-2 14-6-3V13l-6 3z"/></svg></button>
  <div class="tray">
    <i class="dotgrip"></i>
    <svg class="kb" viewBox="0 0 16 16"><path fill="none" stroke="#ccc" d="M2 4q2-2 5-1t6-2"/><rect x="0" y="6" width="16" height="9" rx="1" fill="#ddd"/><path stroke="#666" stroke-dasharray="1 1" d="M2 8.500h12M2 10.500h12M4 12.500h8"/></svg>
    <svg viewBox="0 0 16 16"><circle cx="8" cy="8" r="7" fill="#0c1ca0" stroke="#b8c4e8"/><text x="8" y="12" class="q">?</text></svg>
    <svg class="sm" viewBox="0 0 12 16"><path fill="none" stroke="#fff" d="M4.500 1.500h6v4h-6zM1.500 3.500h6v4h-6z"/><path fill="#fff" d="M3 12h6l-3 3z"/></svg>
    <svg viewBox="0 0 32 32"><use href="#gball"/></svg>
    <svg viewBox="0 0 16 16"><rect width="16" height="16" rx="2" fill="#fff"/><path fill="none" stroke="#2468c8" stroke-width="3" d="M12 4C6 1 2 6 4 10h8V7H8"/><path fill="#f39a2c" d="M2 12h12v3H2z"/></svg>
    <svg viewBox="0 0 32 32"><use href="#eball"/></svg>
    <svg viewBox="0 0 16 16"><path fill="#aaa" d="M3 0h5v5h1v4q0 3-3 3t-4-3V5h1z"/><circle cx="11" cy="11" r="5" fill="#2ea82e"/><path d="M8 11l2 2 4-4" fill="none" stroke="#fff" stroke-width="1.500"/></svg>
    <svg viewBox="0 0 16 16"><path fill="#e8805c" stroke="#8a2c14" d="M1 6h3l6-5v14l-6-5H1z"/><path fill="none" stroke="#e85c3c" d="M12 5q2 3 0 6M14 3q3 5 0 10"/></svg>
    <svg viewBox="0 0 16 16"><circle cx="8" cy="8" r="7.500" fill="#f8d020"/><path fill="#f8e860" d="M1 8C1 0 15 0 15 8z"/><path stroke="#1c8a2c" stroke-width="3" d="M8 4v8M4 8h8"/></svg>
    <svg viewBox="0 0 16 16"><path fill="#fff" d="M0 12h2v2H0zM3 10h2v4H3zM6 8h2v6H6zM9 5h3v9H9zM13 2h3v12h-3z"/></svg>
    <svg viewBox="0 0 16 16"><path fill="#fff" d="M1 5h3l4-4v14l-4-4H1z"/><path fill="none" stroke="#fff" d="M10 5q2 3 0 6M13 3q3 5 0 10"/></svg>
    <div class="clock">16:24<br>2024/11/17</div>
    <svg class="act" viewBox="0 0 16 14"><path fill="#fff" d="M0 0h16v14H0z"/><path fill="#123" d="M6 4h2l4 3-4 3H6z"/></svg>
    <button class="desk"></button>
  </div>
</div>
</body>
</html>
```

FILE: styles.css
```css
:root {
  --c1: #1a73e8;
  --c2: #4e5668;
  --line: #d4d5d8;
  --head: #eeeef0;
}
* { box-sizing: border-box; }
body {
  margin: 0;
  height: 100vh;
  display: flex;
  flex-direction: column;
  overflow: hidden;
  background: #fff;
  color: #2c2c2c;
  font: 12px/16px "Open Sans", "Noto Sans CJK SC", sans-serif;
}
h1, h2, h3, h4, p { margin: 0; font-size: 12px; font-weight: 400; }
button, input, select { font: inherit; color: inherit; margin: 0; }
button { padding: 0; border: 0; background: none; white-space: nowrap; }
a { color: inherit; text-decoration: none; }
svg { display: block; flex: none; }
.sprite { position: absolute; width: 0; height: 0; }

/* icon paint */
.s1, .s2, .sg, .sw, .sr { fill: none; stroke-width: 2; }
.s1 { stroke: var(--c1); }
.s2 { stroke: var(--c2); }
.sg { stroke: #999; stroke-width: 1; }
.sw { stroke: #fff; }
.sr { stroke: #e02020; stroke-width: 1; }
.f1 { fill: var(--c1); }
.f2 { fill: var(--c2); }
.fg { fill: #909090; }
.fd { fill: #555; }
.t1 { fill: var(--tint, #dcebfd); }
.t2 { fill: #c0dcfa; }
symbol[viewBox="0 0 16 16"] .s1, symbol[viewBox="0 0 16 16"] .s2,
symbol[viewBox="0 0 22 22"] .s1, symbol[viewBox="0 0 22 22"] .s2,
svg[viewBox="0 0 16 16"] > .s1, svg[viewBox="0 0 16 16"] > .s2,
svg[viewBox="0 0 12 12"] > .s2 { stroke-width: 1; }
.off { --c1: #bdbdbd; --c2: #bdbdbd; --tint: #f0f0f0; color: #b0b0b0; }
.blue { --c2: #1a73e8; }
.fx { font: italic 17px "Liberation Serif", serif; fill: var(--c1); }
.t3d { font: bold 8px "Open Sans", sans-serif; fill: var(--c1); }
.caret { width: 8px; height: 8px; }

/* title bar */
.titlebar { display: flex; align-items: center; height: 26px; flex: none; padding: 0 13px 0 4px; }
.logo { width: 20px; height: 22px; color: #1a80f0; margin-right: 10px; }
.quick { display: flex; flex: none; }
.quick button { width: 34px; height: 22px; display: flex; align-items: center; justify-content: center; }
.quick button svg { width: 18px; height: 18px; }
.quick button svg.caret { width: 8px; height: 8px; }
.quick .drop { justify-content: space-between; padding: 0 0 0 4px; }
.quick .more { width: 16px; }
.quick .more svg { border-top: 1px solid #555; }
.titlebar h1 { flex: 1; padding: 0 0 2px 200px; white-space: nowrap; }
.winctl { display: flex; gap: 23px; padding-bottom: 5px; }
.winctl svg { width: 12px; height: 12px; }

/* menu row */
.menubar { display: flex; justify-content: space-between; height: 30px; flex: none; border-bottom: 1px solid #ececec; padding: 0 6px 0 22px; }
.tabs { display: flex; gap: 20px; font-size: 13px; line-height: 34px; }
.tabs a { height: 30px; padding: 0 3px; }
.tabs a:first-child { padding-left: 1px; }
.tabs .on { color: var(--c1); font-weight: 600; border-bottom: 2px solid var(--c1); }
.userbar { display: flex; align-items: center; gap: 7px; padding-top: 8px; }
.ask { display: flex; align-items: center; width: 320px; height: 18px; border: 1px solid #ddd; border-radius: 2px; padding-right: 5px; color: #000; }
.ask input { flex: 1; min-width: 0; height: 16px; border: 0; padding: 0; text-indent: -2px; background: none; outline: 0; }
.ask svg, .userbar button svg, .user svg { width: 16px; height: 16px; }
.user { display: flex; align-items: center; padding-right: 9px; }
.userbar button { display: flex; align-items: center; min-width: 17px; justify-content: center; }
.userbar .help { font-size: 16px; color: var(--c2); }
.userbar .help svg.caret { width: 8px; height: 8px; }

/* ribbon */
.ribbon { display: flex; height: 100px; flex: none; padding: 2px 0 3px; }
.group { display: flex; flex-direction: column; justify-content: space-between; padding: 0 11px 0 10px; border-right: 1px solid #dcdcdc; }
.group h2 { text-align: center; }
.tools { display: flex; gap: 10px; }
.big { display: flex; flex-direction: column; align-items: center; gap: 7px; padding-top: 4px; }
.big svg { width: 32px; height: 32px; }
.big svg.cur { width: 24px; height: 30px; margin-bottom: 2px; }
.g-sel { width: 233px; padding: 0 10px 0 16px; }
.g-sel .tools { gap: 14px; }
.g-live { width: 78px; padding-right: 2px; }
.g-steel { width: 115px; }
.g-last { width: 79px; }
.stackcol { display: flex; flex-direction: column; gap: 8px; padding-top: 6px; }
.stackcol button { display: flex; align-items: center; gap: 4px; height: 16px; }
.stackcol svg { width: 15px; height: 15px; }
.stackcol svg.caret { width: 8px; height: 8px; }
.stackcol + .stackcol { margin-left: -6px; }

/* option bar */
.options { display: flex; align-items: center; height: 33px; flex: none; background: #f1f9fe; border: solid #8cc4f8; border-width: 1px 0; }
select {
  appearance: none; width: 100px; height: 31px; border: 0; border-right: 1px solid #d0d4d8; padding: 0 3px; outline: 0; border-radius: 0;
  background: url("data:image/svg+xml,%3Csvg xmlns='http://www.w3.org/2000/svg' width='5' height='4'%3E%3Cpath d='M0 0h5L2.5 4z' fill='%23444'/%3E%3C/svg%3E") no-repeat right 6px center;
}
.optset { display: flex; align-items: center; gap: 10px; padding-left: 11px; height: 27px; }
.optset label { display: flex; align-items: center; white-space: nowrap; }
.optset label.tick { gap: 3px; }
.optset input[type=text] { width: 79px; height: 22px; margin-left: 1px; border: 1px solid #d6d9dd; border-radius: 3px; padding: 0 3px; background: #fff; }
.optset .dis, .optset .dis input { color: #8c8c8c; }
.optset .dis input:disabled { background: #e4e4e4; border-color: #c4c8ce; }
.optset.next { margin-left: 11px; padding-left: 3px; border-left: 1px solid #d0d4d8; }
.optset select { width: 59px; height: 22px; border: 1px solid #d6d9dd; border-radius: 3px; background-color: #fff; background-position: right 4px center; }
.optset input.spin {
  width: 62px;
  background: #fff url("data:image/svg+xml,%3Csvg xmlns='http://www.w3.org/2000/svg' width='5' height='14'%3E%3Cpath d='M0 4h5L2.5 0zM0 10h5L2.5 14z' fill='%23444'/%3E%3C/svg%3E") no-repeat right 5px center;
}
input[type=checkbox] { appearance: none; width: 14px; height: 14px; border: 1px solid #7c7c7c; border-radius: 2px; background: #fff; flex: none; }
input[type=checkbox]:disabled { background: #eee; border-color: #aaa; }
input[type=checkbox].part { background: #7fb8f8; box-shadow: inset 0 0 0 2px #fff; }
input[type=checkbox]:checked {
  border-color: #2a80e4;
  background: #2a80e4 url("data:image/svg+xml,%3Csvg xmlns='http://www.w3.org/2000/svg' width='12' height='12'%3E%3Cpath d='M2 6l3 3 5-6' fill='none' stroke='%23fff' stroke-width='2'/%3E%3C/svg%3E") center;
}

/* workspace */
main { position: relative; flex: 1; min-height: 0; display: grid; grid-template-columns: 191px 244px minmax(0, 1fr) 289px; grid-template-rows: minmax(0, 1fr); gap: 4px; }
.panel { position: relative; border: 1px solid var(--line); background: #fff; display: flex; flex-direction: column; min-height: 0; overflow: hidden; }
.phead { display: flex; align-items: center; height: 28px; flex: none; background: var(--head); padding: 0 8px 0 5px; }
.drag { width: 8px; height: 16px; margin-right: 10px; }
.close { margin-left: auto; }
.close svg { width: 12px; height: 12px; }
.ptitle { padding-left: 2px; }
.ptab { width: 68px; height: 28px; }
.ptab.on { background: #fff; color: var(--c1); }
.vbar, .hbar { position: absolute; border-radius: 2px; background: #e8e8ea; }
.midcol { display: flex; flex-direction: column; gap: 4px; min-height: 0; }
.complist { flex: 357 1 0; }
.props { flex: 459 1 0; }

.navlist { width: 177px; }
.navlist a { display: flex; align-items: center; height: 28px; padding: 1px 0 0 21px; }
.navlist a.on { color: #1a8cff; }
.navlist a.cat { height: 42px; background: #f6f7f9; padding: 0 0 0 11px; position: relative; }
.navlist a.cat.on { background: #eaebef; color: #5084e8; }
.cat svg { width: 24px; height: 24px; margin-right: 14px; }
.cat svg.lock { width: 12px; height: 12px; margin-left: 9px; }
.trial { position: absolute; right: 0; top: 5px; padding: 1px 3px 1px 8px; border-radius: 9px 0 0 9px; background: linear-gradient(90deg, #f6d7a4, #efbf6c); color: #6a3f10; font-size: 11px; }
.navpanel .vbar { left: 181px; top: 70px; width: 4px; height: 361px; }

.ctools { display: flex; gap: 9px; padding: 6px 10px 0; }
.ctools button { width: 32px; height: 26px; background: #f3f3f4; border-radius: 3px; display: flex; align-items: center; justify-content: center; }
.ctools button svg { width: 16px; height: 16px; }
.split { display: flex; gap: 1px; }
.ctools .thin { width: 12px; }
.ctools .thin svg { width: 8px; height: 8px; }
.ctools .fwd { width: 26px; border: 1px solid #dcdcdc; margin-left: auto; }
.csearch { display: flex; align-items: center; height: 26px; margin: 7px 9px 0 8px; padding: 0 9px 0 12px; border-radius: 13px; background: #f3f3f4; }
.csearch input { flex: 1; min-width: 0; border: 0; background: none; padding: 0; outline: 0; }
.csearch input::placeholder { color: #777; }
.csearch svg { width: 16px; height: 16px; }
.citem { align-self: flex-start; margin: 11px 0 0 12px; padding: 0 8px 0 3px; height: 21px; border-radius: 3px; background: #c0d8f0; }

.phdr { display: flex; width: 230px; height: 25px; flex: none; padding-top: 2px; background: #fff; text-align: center; line-height: 22px; }
.phdr span, .phdr b { width: 101px; background: #ececec; border-right: 1px solid #ccc; border-bottom: 1px solid #ccc; font-weight: 400; }
.phdr b { font-weight: 600; }
.phdr .add { width: 28px; overflow: hidden; white-space: nowrap; text-align: left; padding-left: 7px; border-right: 0; }
.prows { margin-bottom: 1px; }
.prows label { display: flex; align-items: center; height: 25px; position: relative; }
.prows span { width: 101px; padding-left: 15px; white-space: nowrap; }
.prows input { width: 100px; height: 21px; border: 1px solid #dedede; padding: 0 2px; background: #fff; outline: 0; }
.prows i { width: 8px; height: 8px; border-radius: 4px; border: 1px solid #b4b6ba; background: #dfe0e3; margin-left: 17px; }
.prows .lnk { color: #1560ff; }
.prows .act input { border-color: #4a80d8; color: #555; }
.dots { width: 16px; height: 13px; border: 1px solid #4a90e2; border-radius: 2px; background: #eaf3fe; display: flex; align-items: center; justify-content: center; }
.dots svg { width: 12px; height: 10px; }
.prows .dots { position: absolute; left: 181px; top: 6px; }
.pgroup { width: 230px; height: 24px; flex: none; margin-bottom: 1px; background: #ececec; text-align: left; padding-left: 10px; display: flex; align-items: center; gap: 7px; }
.pgroup::before { content: ""; border: solid transparent; border-width: 3px 0 3px 4px; border-left-color: #888; }
.props .vbar { right: 4px; bottom: 24px; width: 4px; height: 154px; }
.props .hbar { left: 12px; bottom: 4px; width: 194px; height: 4px; }

.canvas { position: relative; margin-top: -1px; background: #000; overflow: hidden; }
.scene { width: 100%; height: 100%; }
.axis { fill: #fff; font-size: 17px; text-anchor: middle; }
.viewbar { position: absolute; right: 0; top: 0; width: 32px; height: 420px; background: #fff; border: 1px solid #ccc; border-radius: 3px 3px 0 0; padding: 12px 3px 0 0; display: flex; flex-direction: column; align-items: center; gap: 8px; }
.viewbar svg { width: 21px; height: 21px; }

.dtabs { display: flex; align-items: flex-end; gap: 3px; height: 27px; flex: none; padding: 0 2px; border-bottom: 1px solid #c8c8c8; }
.dtabs button { width: 60px; height: 21px; background: #dedede; border-radius: 3px 3px 0 0; color: #555; }
.dtabs .on { width: 62px; height: 24px; margin-bottom: -1px; background: #fff; border: 1px solid #c4c4c4; border-bottom: 0; color: var(--c1); }
.dwrap { position: relative; flex: 1; min-height: 0; margin: 2px 2px 0; border: 1px solid #d4d4d4; overflow: hidden; }
table { border-collapse: collapse; table-layout: fixed; }
.display table { width: 269px; }
.display th, .display td { height: 21px; padding: 0; border: 1px solid #dcdcdc; border-width: 0 1px 1px 0; font-weight: 400; text-align: center; line-height: 14px; }
.display th { height: 20px; }
.display th:nth-child(2), .display th:nth-child(3) { width: 63px; }
.display td:first-child { text-align: left; padding-left: 40px; background: linear-gradient(#e4e4e4, #e4e4e4) 8px 0 / 1px 100% no-repeat, linear-gradient(#e4e4e4, #e4e4e4) 18px 0 / 1px 100% no-repeat, linear-gradient(#e4e4e4, #e4e4e4) 18px 9px / 16px 1px no-repeat; }
.display .root td:first-child { padding-left: 2px; background: none; }
.display td input { display: block; margin: 0 auto; }
.minus { display: inline-block; width: 13px; height: 13px; line-height: 10px; text-align: center; border: 1px solid #888; border-radius: 2px; margin-right: 6px; vertical-align: top; }
.dwrap .vbar { right: 3px; top: 12px; width: 4px; height: 155px; }
.dfoot { height: 39px; flex: none; display: flex; justify-content: flex-end; padding: 7px 8px 0; }
.plain { height: 26px; width: 90px; border: 1px solid #c8c8c8; border-radius: 3px; background: #fff; }

/* dialogs */
.dialog { position: absolute; background: #fff; border: 1px solid #b8b8b8; }
.dialog h3 { font-size: 14px; line-height: 20px; }
.nodes { left: 479px; top: 78px; width: 963px; height: 535px; padding: 9px 11px 0; }
.nbody { display: flex; height: 451px; margin-top: 10px; border: 1px solid #c4c4c4; border-right: 0; }
.ntable { width: 537px; flex: none; }
.ntable table { width: 534px; }
.ntable th, .ntable td { height: 21px; padding: 0 3px 0 2px; border: 1px solid #d0d0d0; border-width: 0 1px 1px 0; text-align: left; white-space: nowrap; line-height: 16px; }
.ntable th { background: #efefef; font-weight: 400; text-align: center; padding: 0; }
.ntable thead th { height: 20px; padding-top: 2px; }
.ntable thead th:first-child { width: 22px; }
.ntable thead th:nth-child(3) { width: 201px; }
.ntable td:nth-child(2) { background: #fffde6; }
.ntable th.sel, .ntable .cur th { background: #80bafa; color: #fff; font-weight: 700; }
.ntable .cur td:last-child { padding: 0; }
.cell { display: flex; align-items: center; justify-content: space-between; height: 20px; border: 2px solid #62a4ea; padding: 0 2px 0 3px; color: #555; }
.preview { flex: 1; min-width: 0; margin-top: 50px; border: 1px solid #c4c4c4; border-width: 1px 0 0 1px; padding: 4px 0 0 7px; }
.preview h4 { margin-left: -2px; color: #000; }
.preview .pic { width: 115px; height: 331px; background: #000; }
.preview p { margin-top: 7px; width: 116px; overflow: hidden; white-space: nowrap; }
.mesh { fill: none; stroke: #fff; stroke-width: 2; shape-rendering: crispEdges; }
.dim { fill: none; stroke: #fff; stroke-width: 1; }
.cad { font: 20px "Liberation Serif", serif; fill: #fff; }
.cad.xl { font-size: 26px; }
.cadnote { font: 300 15px "Noto Sans CJK SC", sans-serif; fill: #fff; }
.cadnote.mono { font: 13px "Liberation Mono", monospace; }
.cadname { font: 300 21px "Noto Sans CJK SC", sans-serif; fill: #0ff; }
.cadline { stroke: #0ff; stroke-width: 2; }

.picker { left: 1152px; top: 93px; width: 663px; height: 598px; padding: 9px 12px 0 11px; box-shadow: 2px 2px 18px rgba(0, 0, 0, .75); }
.dhead { display: flex; align-items: center; height: 20px; }
.dhead .close svg { width: 14px; height: 14px; }
.gallery { display: flex; align-items: flex-start; gap: 6px; height: 438px; margin-top: 10px; border: 1px solid #a8a8a8; border-width: 1px 0 0 1px; }
.tile { width: 306px; height: 219px; background: #000; flex: none; }
.tile svg { width: 306px; height: 219px; }
.tile.on svg { outline: 3px solid #2a80e4; outline-offset: -4px; }
.sbar { display: flex; flex-direction: column; justify-content: space-between; width: 14px; height: 437px; margin-left: -2px; border: 1px solid #c4c4c4; background: #f8f8f8; }
.sbar svg { width: 12px; height: 14px; background: #fff; border-bottom: 2px solid #c8c8c8; }
.sbar svg:last-child { border-bottom: 0; border-top: 2px solid #c8c8c8; }
.picker p { margin: 8px 0 50px; }
.acts { display: flex; justify-content: flex-end; gap: 6px; padding-top: 7px; border-top: 1px solid #c4c4c4; }
.acts button { width: 80px; height: 26px; border-radius: 3px; }
.primary { background: #2a80e4; color: #fff; }
.grip { position: absolute; right: 3px; bottom: 4px; width: 8px; height: 8px; }

/* status bar */
.status { display: flex; align-items: center; height: 31px; flex: none; padding: 0 11px 0 2px; background: #fbfbfb; }
.st1 { width: 90px; }
.st2 { width: 140px; }
.st3 { width: 110px; }
.st4 { width: 110px; }
.snap { display: flex; gap: 4px; width: 248px; }
.snap button { width: 24px; height: 24px; border: 1px solid #999; border-radius: 3px; background: #fff; display: flex; align-items: center; justify-content: center; gap: 6px; }
.snap .w { width: 36px; }
.snap .gap { margin-left: 2px; }
.snap .on { background: #dbe8fc; border-color: #2a80e4; }
.snap svg { width: 16px; height: 16px; }
.snap svg.caret { width: 7px; height: 7px; }
.tipicon { width: 16px; height: 16px; margin-right: 3px; }
.done { display: flex; align-items: center; gap: 6px; margin-left: auto; }
.done svg { width: 14px; height: 14px; }

/* task bar */
.taskbar {
  display: flex; align-items: center; height: 40px; flex: none; padding: 0 2px 0 8px; border-top: 1px solid #1b4560; color: #fff;
  box-shadow: inset 0 1px 0 rgba(255, 255, 255, .45);
  background: linear-gradient(115deg, transparent 37%, rgba(255, 255, 255, .18) 40%, transparent 40.500%, transparent 55%, rgba(255, 255, 255, .1) 57%, transparent 60%),
    linear-gradient(90deg, #2a6f9c 0, #1f6897 70px, #5fb0da 270px, #43a2d4 380px, #6bb8e0 470px, #3f9ccc 640px, #4ea4da 800px, #2c84c4 960px, #2a7fc8 1100px, #1d65ab 1250px, #1a5599 1480px, #1d4a80 1600px, #163860 100%);
}
.orb svg { width: 38px; height: 38px; }
.dotgrip { width: 8px; height: 30px; margin: 0 10px 0 12px; background: radial-gradient(circle, #0b3550 1px, transparent 1px) 0 0 / 3px 4px; }
.app { width: 59px; height: 38px; margin-right: 3px; border: 1px solid #1c5878; border-radius: 3px; background: linear-gradient(135deg, rgba(255, 255, 255, .5), rgba(255, 255, 255, .15)); box-shadow: inset 0 0 0 1px rgba(255, 255, 255, .5); display: flex; align-items: center; justify-content: center; }
.app.on { background: linear-gradient(135deg, rgba(255, 255, 255, .75), rgba(255, 255, 255, .4)); }
.app svg { width: 32px; height: 32px; }
.tray { display: flex; align-items: center; gap: 8px; margin-left: auto; }
.tray .dotgrip { margin: 0 2px 0 0; }
.tray svg { width: 16px; height: 16px; }
.tray svg.kb { margin-right: -2px; }
.tray svg.sm { width: 12px; }
.q { font: bold 11px "Open Sans", sans-serif; fill: #fff; text-anchor: middle; }
.clock { width: 80px; text-align: center; line-height: 18px; }
.tray svg.act { width: 16px; height: 14px; margin-right: 3px; }
.desk { width: 13px; height: 38px; border: 1px solid #6f8cae; background: linear-gradient(135deg, #54759e, #1d3c66); }
```
